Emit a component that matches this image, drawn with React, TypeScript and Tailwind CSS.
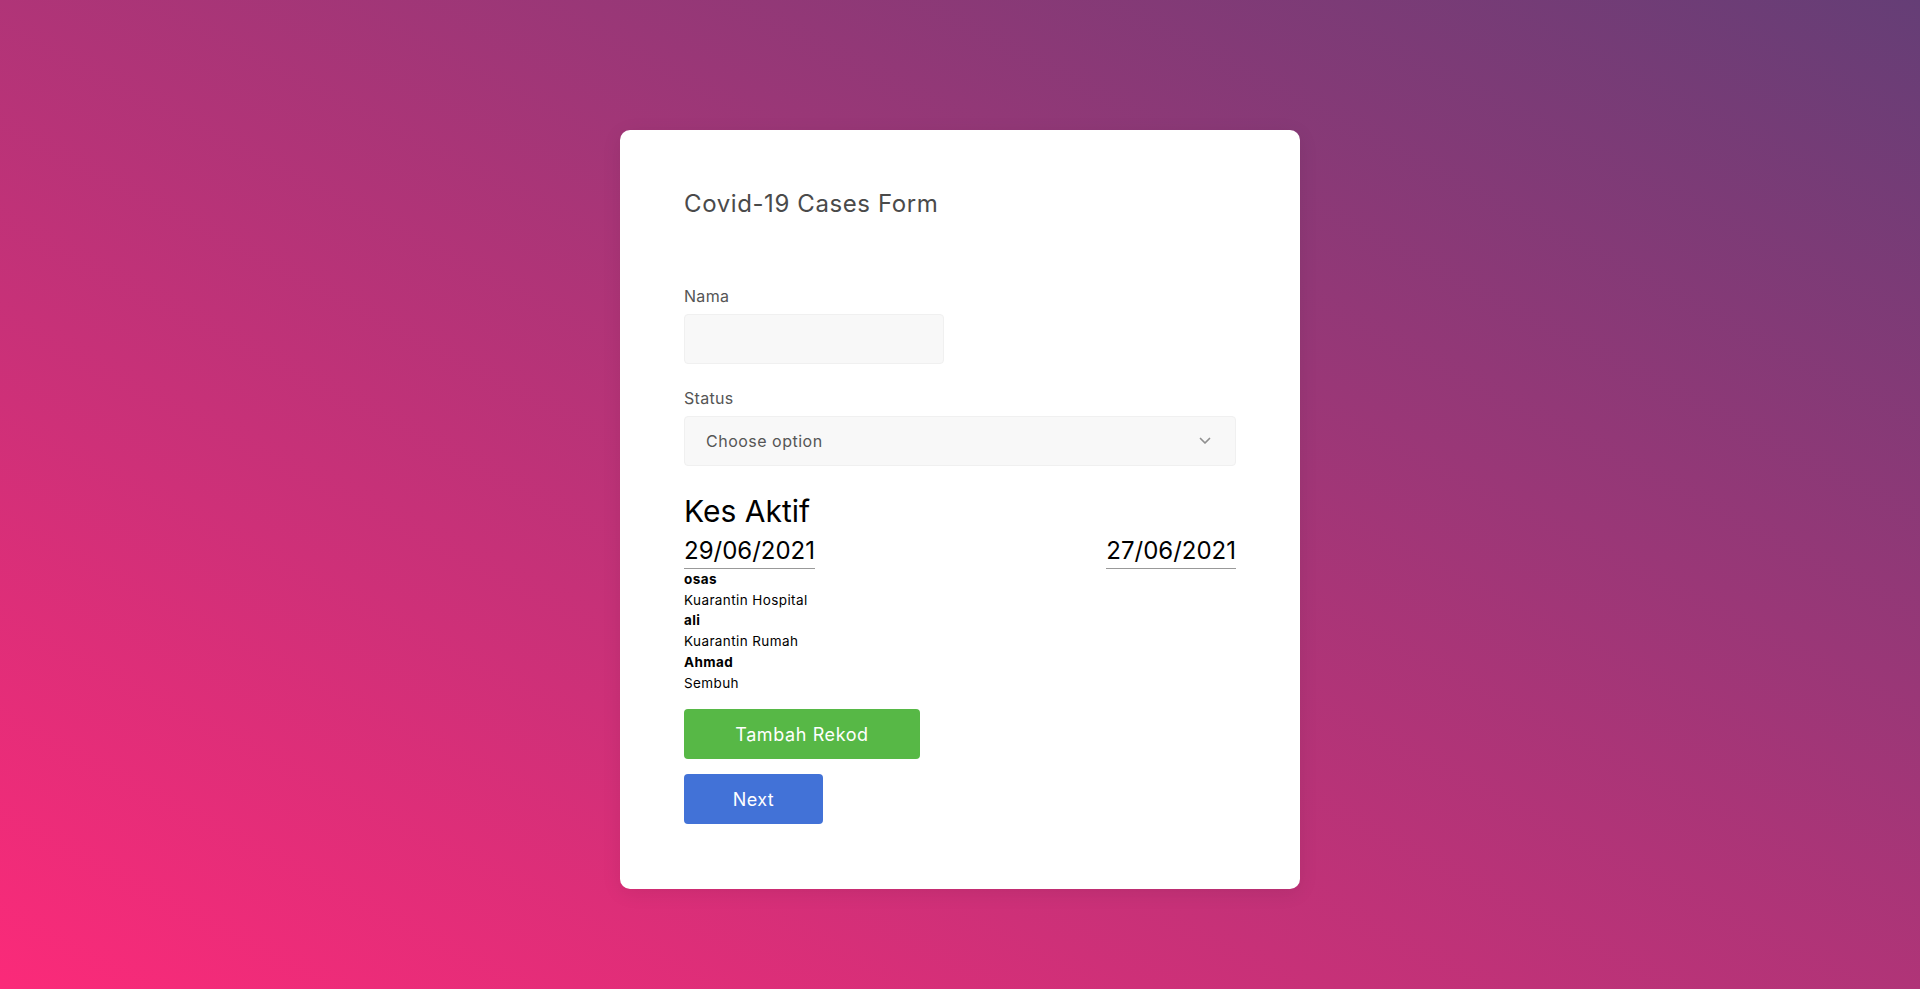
import React from "react";

function Chevron() {
  return (
    <svg width="12" height="8" viewBox="0 0 12 8" fill="none">
      <polyline points="1.5,1.5 6,6 10.5,1.5" stroke="#8f8f8f" strokeWidth="1.7" strokeLinecap="round" strokeLinejoin="round" />
    </svg>
  );
}

const rows = [
  { name: "osas", status: "Kuarantin Hospital" },
  { name: "ali", status: "Kuarantin Rumah" },
  { name: "Ahmad", status: "Sembuh" },
];

export default function App() {
  return (
    <div className="h-[989px] w-full bg-[linear-gradient(to_top_right,#fb2a79,#653e76)] flex justify-center pt-[130px] font-['Inter',sans-serif]">
      <div className="w-[680px] h-[759px] bg-white rounded-[10px] shadow-[0_4px_20px_rgba(0,0,0,0.08)] px-[64px] pt-[59px] flex flex-col">
        <h1 className="text-[24px] leading-[30px] tracking-[0.6px] text-[#4a4a4a] font-normal">Covid-19 Cases Form</h1>

        <label className="mt-[65px] text-[16px] leading-[24px] tracking-[0.3px] text-[#555]">Nama</label>
        <div className="mt-[6px] w-[260px] h-[50px] bg-[#f8f8f8] border border-[#f0f0f0] rounded-[4px]" />

        <label className="mt-[22px] text-[16px] leading-[24px] tracking-[0.3px] text-[#555]">Status</label>
        <div className="mt-[6px] w-full h-[50px] bg-[#f8f8f8] border border-[#f0f0f0] rounded-[4px] flex items-center justify-between pl-[21px] pr-[24px]">
          <span className="text-[16px] tracking-[0.5px] text-[#555]">Choose option</span>
          <Chevron />
        </div>

        <h2 className="mt-[27px] text-[30px] leading-[36px] text-black font-normal">Kes Aktif</h2>

        <div className="mt-[7px] flex justify-between items-start">
          <span className="text-[24px] leading-[30px] text-black pb-[2px] border-b border-[#999]">29/06/2021</span>
          <span className="text-[24px] leading-[30px] text-black pb-[2px] border-b border-[#999]">27/06/2021</span>
        </div>

        <div className="flex flex-col text-[13.5px] leading-[20.7px] tracking-[0.4px] text-black">
          {rows.map((r) => (
            <React.Fragment key={r.name}>
              <span className="font-bold">{r.name}</span>
              <span>{r.status}</span>
            </React.Fragment>
          ))}
        </div>

        <button className="mt-[16px] w-[236px] h-[50px] bg-[#57b846] rounded-[4px] text-white text-[18px] tracking-[0.6px] font-normal">
          Tambah Rekod
        </button>
        <button className="mt-[15px] w-[139px] h-[50px] bg-[#4272d7] rounded-[4px] text-white text-[18px] tracking-[0.4px] font-normal">
          Next
        </button>
      </div>
    </div>
  );
}
